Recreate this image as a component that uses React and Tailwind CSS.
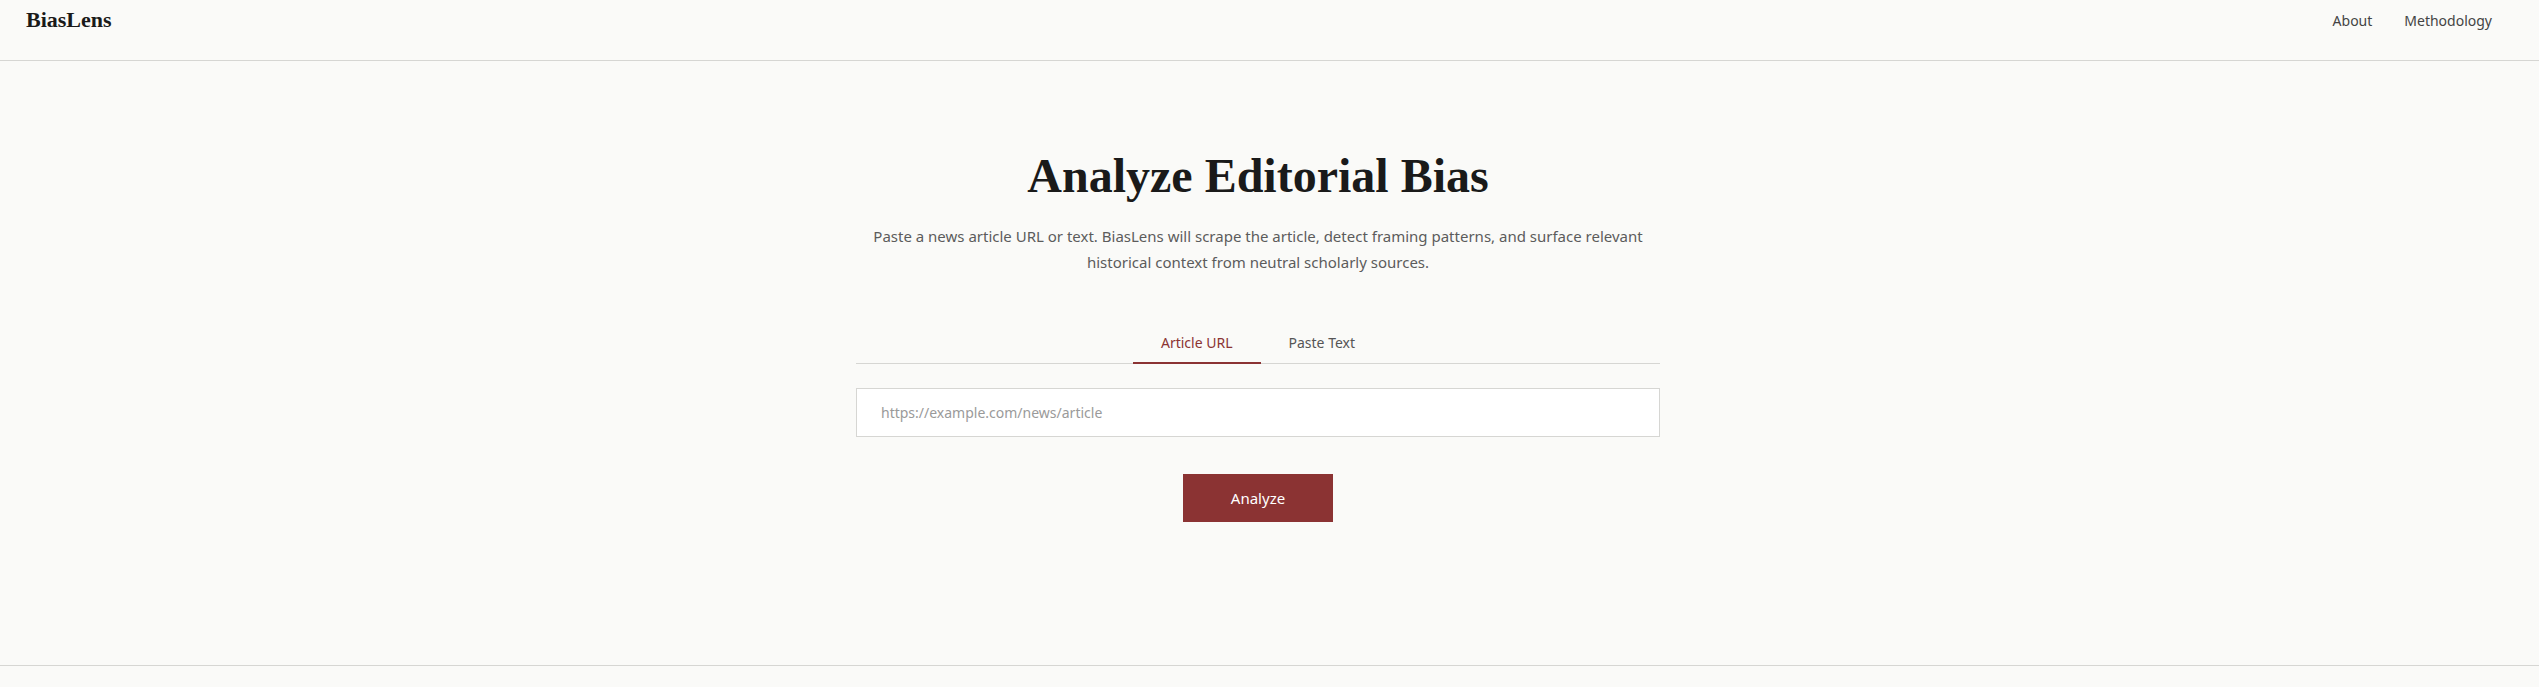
import { useState } from "react";

const sans = "font-['Noto_Sans','Open_Sans',sans-serif]";
const serif = "font-['Liberation_Serif','DejaVu_Serif',serif]";

function Header() {
    return (
        <header className="border-b border-[#d6d6d3] h-[61px]">
            <div className="w-[calc(100%-23px)] flex items-center justify-between pl-[26px] pr-6 pt-[6px]">
                <a href="#" className={`${serif} text-[22px] leading-[28px] font-bold text-[#1a1a1a]`}>BiasLens</a>
                <nav className={`${sans} flex gap-8 text-[14px] text-[#444]`}>
                    <a href="#">About</a>
                    <a href="#">Methodology</a>
                </nav>
            </div>
        </header>
    );
}

export default function App() {
    const [tab, setTab] = useState("url");

    return (
        <div className="min-h-screen bg-[#fafaf8] text-[#1a1a1a]">
            <Header />

            <main className="h-[604px]">
                <div className="w-[calc(100%-23px)] flex flex-col items-center pt-[86px]">
                    <h1 className={`${serif} text-[48px] leading-[58px] font-bold text-[#1a1a1a]`}>
                        Analyze Editorial Bias
                    </h1>

                    <p className={`${sans} mt-[18px] max-w-[780px] text-center text-[15px] leading-[26px] text-[#5c5c5c]`}>
                        Paste a news article URL or text. BiasLens will scrape the article, detect framing patterns, and surface relevant historical context from neutral scholarly sources.
                    </p>

                    <div className={`${sans} w-[804px] mt-[46px] flex flex-col items-center`}>
                        <div className="w-full flex justify-center border-b border-[#d6d6d3]">
                            <button
                                onClick={() => setTab("url")}
                                className={`px-7 pt-3 pb-[9px] -mb-px border-b-2 text-[14px] leading-5 ${tab === "url" ? "border-[#8b3333] text-[#8b3333]" : "border-transparent text-[#555]"}`}
                            >
                                Article URL
                            </button>
                            <button
                                onClick={() => setTab("text")}
                                className={`px-7 pt-3 pb-[9px] -mb-px border-b-2 text-[14px] leading-5 ${tab === "text" ? "border-[#8b3333] text-[#8b3333]" : "border-transparent text-[#555]"}`}
                            >
                                Paste Text
                            </button>
                        </div>

                        <input
                            type="text"
                            placeholder="https://example.com/news/article"
                            className="mt-6 w-full h-[49px] px-6 bg-white border border-[#d6d6d3] text-[14px] placeholder:text-[#9a9a9a] outline-none"
                        />

                        <button className="mt-[37px] w-[150px] h-[48px] bg-[#8b3333] text-white text-[15px]">
                            Analyze
                        </button>
                    </div>
                </div>
            </main>

            <footer className="border-t border-[#d6d6d3] h-[60px]" />
        </div>
    );
}
